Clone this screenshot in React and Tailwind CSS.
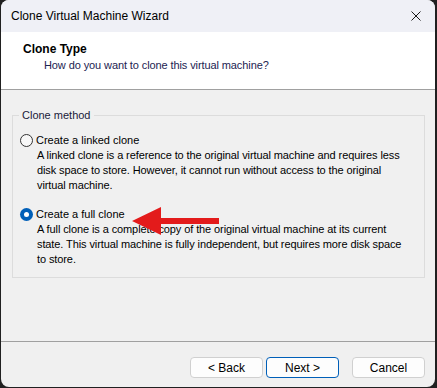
import React from 'react';

const font = { fontFamily: '"Liberation Sans", Arial, sans-serif' };

const Radio = ({ checked }) =>
  checked ? (
    <span className="w-[13px] h-[13px] rounded-full bg-[#005fb8] flex items-center justify-center shrink-0">
      <span className="w-[5px] h-[5px] rounded-full bg-white" />
    </span>
  ) : (
    <span className="w-[13px] h-[13px] rounded-full border border-[#333] bg-[#f7f7f7] shrink-0" />
  );

const Option = ({ checked, label, children, className }) => (
  <div className={className}>
    <div className="flex items-center gap-[3px] ml-[7px] h-4 leading-4">
      <Radio checked={checked} />
      <span className="text-[11px]">{label}</span>
    </div>
    <p className="ml-[24px] leading-[15px] whitespace-nowrap text-[11px] tracking-[-0.1px]">{children}</p>
  </div>
);

const App = () => (
  <div className="w-[437px] h-[388px] bg-[#202020] pl-[1px] pr-[2px] pb-[1px] flex text-[12px] text-black" style={font}>
    <div className="flex-1 flex flex-col rounded-[8px] overflow-hidden bg-[#f0f0f0]">
      <div className="h-[32px] bg-[#eff0f6] flex items-center justify-between pl-[10px] pr-[12px]">
        <span>Clone Virtual Machine Wizard</span>
        <svg width="10" height="10" viewBox="0 0 10 10" className="mr-[2px]">
          <path d="M0.5 0.5L9.5 9.5M9.5 0.5L0.5 9.5" stroke="#1a1a1a" strokeWidth="1" />
        </svg>
      </div>
      <div className="h-[58px] bg-white border-b border-[#a0a0a0] pt-[9px] pl-[22px]">
        <div className="font-bold leading-4">Clone Type</div>
        <div className="pl-[21px] leading-4 text-[11px] tracking-[-0.1px] text-[#1c2351]">How do you want to clone this virtual machine?</div>
      </div>
      <fieldset className="relative mt-[17px] ml-[11px] mr-[10px] h-[171px] border border-[#dcdcdc] px-0 pt-0">
        <legend className="ml-[6px] px-[3px] leading-4 text-[11px] text-[#1a1a3a]">Clone method</legend>
        <Option className="mt-[9px]" label="Create a linked clone">
          A linked clone is a reference to the original virtual machine and requires less<br />
          disk space to store. However, it cannot run without access to the original<br />
          virtual machine.
        </Option>
        <Option className="mt-[13px]" checked label="Create a full clone">
          A full clone is a complete copy of the original virtual machine at its current<br />
          state. This virtual machine is fully independent, but requires more disk space<br />
          to store.
        </Option>
        <svg className="absolute left-[118px] top-[83px]" width="90" height="30" viewBox="0 0 90 30">
          <path d="M1 15 L30 1 L30 12 L88 12 L88 18 L30 18 L30 29 Z" fill="#e31b1b" />
        </svg>
      </fieldset>
      <div className="flex-1" />
      <div className="h-[46px] border-t border-[#a0a0a0] flex justify-end items-start pt-[15px] pr-[10px]">
        <button className="w-[73px] h-[21px] rounded-[4px] border border-[#d0d0d0] bg-[#fdfdfd] leading-none">&lt; Back</button>
        <button className="ml-[3px] w-[73px] h-[21px] rounded-[4px] border border-[#005fb8] bg-[#fdfdfd] leading-none">Next &gt;</button>
        <button className="ml-[13px] w-[73px] h-[21px] rounded-[4px] border border-[#d0d0d0] bg-[#fdfdfd] leading-none">Cancel</button>
      </div>
    </div>
  </div>
);

export default App;
